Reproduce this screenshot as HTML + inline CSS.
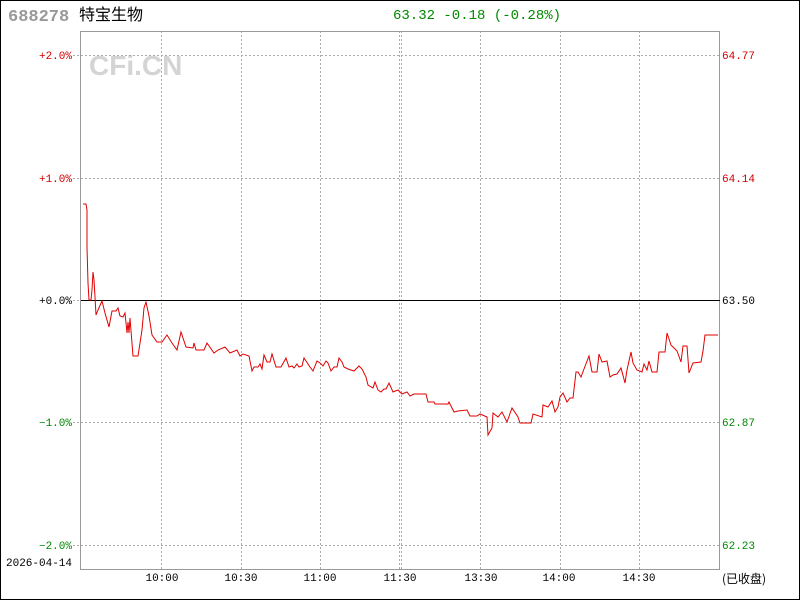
<!DOCTYPE html>
<html><head><meta charset="utf-8"><style>
html,body{margin:0;padding:0;background:#fff}
svg{display:block}
text{font-family:"Liberation Mono","Noto Sans CJK SC",monospace}
</style></head><body>
<svg width="800" height="600" viewBox="0 0 800 600" xmlns="http://www.w3.org/2000/svg">
<rect x="0.5" y="0.5" width="799" height="599" fill="#fff" stroke="#000"/>
<text x="8" y="21" font-size="17" fill="#999" font-weight="bold">688278</text>
<text x="79" y="20" font-size="16" fill="#000" style="font-family:'Noto Sans CJK SC',sans-serif">特宝生物</text>
<text x="393" y="19" font-size="14" fill="#008800">63.32 -0.18 (-0.28%)</text>
<text x="89" y="75" font-size="28" font-weight="bold" fill="#d4d4d4" style="font-family:'Liberation Sans',sans-serif">CFi.CN</text>
<g stroke="#aaa" stroke-dasharray="2,2" stroke-width="1">
<line x1="73" y1="55.5" x2="720" y2="55.5"/>
<line x1="73" y1="178.5" x2="720" y2="178.5"/>
<line x1="73" y1="422.5" x2="720" y2="422.5"/>
<line x1="73" y1="545.5" x2="720" y2="545.5"/>
<line x1="161.5" y1="31" x2="161.5" y2="569"/>
<line x1="241.5" y1="31" x2="241.5" y2="569"/>
<line x1="320.5" y1="31" x2="320.5" y2="569"/>
<line x1="399.5" y1="31" x2="399.5" y2="569"/>
<line x1="401.5" y1="31" x2="401.5" y2="569"/>
<line x1="480.5" y1="31" x2="480.5" y2="569"/>
<line x1="560.5" y1="31" x2="560.5" y2="569"/>
<line x1="639.5" y1="31" x2="639.5" y2="569"/>
</g>
<line x1="73" y1="300.5" x2="80" y2="300.5" stroke="#aaa" stroke-dasharray="2,2"/>
<rect x="80.5" y="31.5" width="639" height="538" fill="none" stroke="#999"/>
<line x1="81" y1="300.5" x2="720" y2="300.5" stroke="#000"/>
<polyline fill="none" stroke="#e00000" stroke-width="1" points="83,204 86,204 87,210 87,247 88,283 89,300 91,300 92,290 93,272 94,280 95,297 96,315 98,310 102,301 105,313 109,327 112,311 116,311 118,308 120,316 123,317 125,313 127,333 128,322 129,333 130,318 133,356 138,356 142,330 144,308 146,302 149,316 152,335 157,342 162,342 167,335 172,343 177,350 181,332 186,347 193,348 194,343 196,350 204,350 207,343 214,353 218,350 225,347 230,353 237,350 240,356 243,354 249,356 252,371 254,367 258,367 260,364 262,369 264,355 267,362 270,362 272,354 276,367 281,367 286,358 289,367 292,366 294,368 297,364 299,367 302,366 304,358 308,364 310,367 313,371 317,361 320,363 323,366 326,361 328,363 331,371 334,367 337,367 339,358 342,362 344,367 348,369 354,371 359,366 362,369 366,377 368,385 373,388 375,382 378,390 381,392 384,389 386,389 389,383 393,392 398,390 402,394 407,392 410,396 414,394 426,394 428,402 434,402 435,404 448,404 449,402 454,412 458,411 467,410 470,416 477,416 480,414 487,417 488,435 492,428 493,413 498,417 502,412 507,422 512,408 518,417 520,423 531,423 533,414 542,417 543,405 548,407 552,401 555,412 558,407 560,397 563,393 567,402 570,398 573,398 576,372 578,372 581,377 584,369 589,356 592,372 597,372 599,354 602,362 607,361 610,377 613,375 617,374 621,368 625,383 627,370 631,352 633,363 637,370 642,372 644,364 647,370 649,361 652,372 657,372 659,352 665,352 667,333 671,345 677,351 681,362 683,346 687,346 689,373 693,363 701,362 703,351 705,335 718,335"/>
<g font-size="11" text-anchor="end">
<text x="72" y="59" fill="#d00000">+2.0%</text>
<text x="72" y="182" fill="#d00000">+1.0%</text>
<text x="72" y="304" fill="#000">+0.0%</text>
<text x="72" y="426" fill="#008800">−1.0%</text>
<text x="72" y="549" fill="#008800">−2.0%</text>
</g>
<g font-size="11">
<text x="722" y="59" fill="#d00000">64.77</text>
<text x="722" y="182" fill="#d00000">64.14</text>
<text x="722" y="304" fill="#000">63.50</text>
<text x="722" y="426" fill="#008800">62.87</text>
<text x="722" y="549" fill="#008800">62.23</text>
</g>
<text x="6" y="566" font-size="11" fill="#000">2026-04-14</text>
<g font-size="11" fill="#000" text-anchor="middle">
<text x="162" y="581">10:00</text>
<text x="241" y="581">10:30</text>
<text x="320" y="581">11:00</text>
<text x="400" y="581">11:30</text>
<text x="481" y="581">13:30</text>
<text x="559" y="581">14:00</text>
<text x="639" y="581">14:30</text>
</g>
<text x="722" y="583" font-size="12" fill="#000" style="font-family:'Noto Sans CJK SC',sans-serif">(已收盘)</text>
</svg>
</body></html>
